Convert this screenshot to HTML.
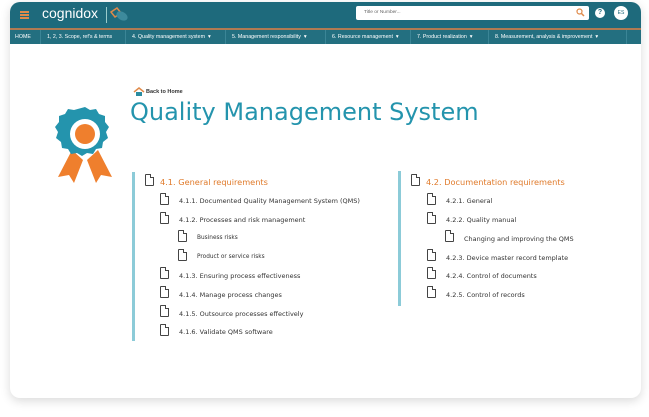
<!DOCTYPE html>
<html><head><style>
*{margin:0;padding:0;box-sizing:border-box}
body{width:649px;height:417px;background:#fff;font-family:"DejaVu Sans",Verdana,sans-serif;position:relative;overflow:hidden}
.card{position:absolute;left:10px;top:2px;width:631px;height:396px;border-radius:10px;background:#fff;box-shadow:0 3px 10px rgba(0,0,0,.15);overflow:hidden}
.top{position:absolute;left:0;top:0;width:100%;height:26px;background:#1e6a7c}
.ol{position:absolute;left:0;top:26px;width:100%;height:2px;background:#b07a52}
.nav{position:absolute;left:0;top:28px;width:100%;height:14px;background:#236f80;font-family:"Liberation Sans",sans-serif;font-size:5.3px;color:#fff}
.nav span{position:absolute;top:4px;white-space:nowrap}
.sep{position:absolute;top:0;width:1px;height:14px;background:#3b8596}
.t{position:absolute;white-space:nowrap;font-size:6.5px;color:#333}
.h{position:absolute;white-space:nowrap;font-size:8.2px;color:#e07b2c}
.doc{position:absolute;width:9px;height:12px;border:1px solid #444;border-radius:1px;background:#fff}
.doc:after{content:"";position:absolute;right:-1px;top:-1px;width:3px;height:3px;background:#fff;border-left:1px solid #444;border-bottom:1px solid #444}
</style></head><body>
<div class="card">
<div class="top"></div>
<div class="ol"></div>
<div style="position:absolute;left:10px;top:9px;width:9px;height:2px;background:#e08a4a;box-shadow:0 3px 0 #e08a4a,0 6px 0 #e08a4a"></div>
<div style="position:absolute;left:32px;top:3px;color:#fff;font-family:'Liberation Sans',sans-serif;font-size:14px">cognidox</div>
<div style="position:absolute;left:96px;top:5px;width:1px;height:16px;background:#9cc"></div>
<svg style="position:absolute;left:99px;top:4px" width="22" height="18"><path d="M2 6 L8 2 L12 7 L6 11Z" fill="none" stroke="#e08a4a" stroke-width="1.5"/><ellipse cx="13" cy="10" rx="6" ry="4" fill="#3d8a9c" transform="rotate(30 13 10)"/></svg>
<div style="position:absolute;left:346px;top:4px;width:233px;height:14px;background:#fff;border-radius:2px;font-family:'Liberation Sans',sans-serif;font-size:4.8px;color:#666;padding:4px 0 0 8px">Title or Number...</div>
<svg style="position:absolute;left:566px;top:6px" width="9" height="9"><circle cx="3.5" cy="3.5" r="2.5" fill="none" stroke="#e08a4a" stroke-width="1.2"/><path d="M5.5 5.5L8 8" stroke="#e08a4a" stroke-width="1.5"/></svg>
<div style="position:absolute;left:585px;top:6px;width:10px;height:10px;border-radius:50%;background:#fff;color:#1e6a7c;font:bold 7px 'Liberation Sans',sans-serif;text-align:center;line-height:10px">?</div>
<div style="position:absolute;left:604px;top:4px;width:14px;height:14px;border-radius:50%;background:#fff;color:#1e6a7c;font:5px 'Liberation Sans',sans-serif;text-align:center;line-height:14px">ES</div>
<div class="nav">
<span style="left:5px">HOME</span><i class="sep" style="left:30px"></i>
<span style="left:37px">1, 2, 3. Scope, ref's &amp; terms</span><i class="sep" style="left:115px"></i>
<span style="left:122px">4. Quality management system &nbsp;▾</span><i class="sep" style="left:215px"></i>
<span style="left:222px">5. Management responsibility &nbsp;▾</span><i class="sep" style="left:315px"></i>
<span style="left:322px">6. Resource management &nbsp;▾</span><i class="sep" style="left:400px"></i>
<span style="left:407px">7. Product realization &nbsp;▾</span><i class="sep" style="left:478px"></i>
<span style="left:485px">8. Measurement, analysis &amp; improvement &nbsp;▾</span><i class="sep" style="left:616px"></i>
</div>
</div>
<svg style="position:absolute;left:133px;top:87px" width="12" height="9"><path d="M1 5L6 1L11 5" fill="none" stroke="#e08a4a" stroke-width="1.5"/><path d="M3 5V9H9V5" fill="#2a8ca0"/></svg>
<div style="position:absolute;left:146px;top:89px;font:bold 5.5px 'Liberation Sans',sans-serif;color:#333">Back to Home</div>
<div style="position:absolute;left:130px;top:98px;font-size:24px;color:#2494ad;white-space:nowrap">Quality Management System</div>
<svg style="position:absolute;left:55px;top:105px" width="60" height="80" viewBox="0 0 60 80">
<path d="M17 45 L3 72 L14 70 L19 78 L28 55Z M43 45 L57 72 L46 70 L41 78 L32 55Z" fill="#ef7f2d"/>
<path d="M30 2 l5 3 6 -1 3 5 6 2 0 6 4 5 -3 5 2 6 -5 4 -1 6 -6 1 -3 5 -6 -1 -5 3 -5 -3 -6 1 -3 -5 -6 -1 -1 -6 -5 -4 2 -6 -3 -5 4 -5 0 -6 6 -2 3 -5 6 1Z" fill="#2494ad"/>
<circle cx="30" cy="29" r="15" fill="#fff"/><circle cx="30" cy="29" r="10" fill="#ef7f2d"/>
</svg>
<div style="position:absolute;left:132px;top:172px;width:3px;height:169px;background:#8ccbd8"></div>
<div style="position:absolute;left:398px;top:171px;width:3px;height:135px;background:#8ccbd8"></div>
<i class="doc" style="left:145px;top:174px"></i><div class="h" style="left:160px;top:177px">4.1. General requirements</div>
<i class="doc" style="left:160px;top:193px"></i><div class="t" style="left:179px;top:197px">4.1.1. Documented Quality Management System (QMS)</div>
<i class="doc" style="left:160px;top:212px"></i><div class="t" style="left:179px;top:216px">4.1.2. Processes and risk management</div>
<i class="doc" style="left:178px;top:230px"></i><div class="t" style="left:197px;top:235px;font-size:5.8px">Business risks</div>
<i class="doc" style="left:178px;top:249px"></i><div class="t" style="left:197px;top:254px;font-size:5.8px">Product or service risks</div>
<i class="doc" style="left:160px;top:267px"></i><div class="t" style="left:179px;top:272px">4.1.3. Ensuring process effectiveness</div>
<i class="doc" style="left:160px;top:286px"></i><div class="t" style="left:179px;top:291px">4.1.4. Manage process changes</div>
<i class="doc" style="left:160px;top:305px"></i><div class="t" style="left:179px;top:310px">4.1.5. Outsource processes effectively</div>
<i class="doc" style="left:160px;top:324px"></i><div class="t" style="left:179px;top:328px">4.1.6. Validate QMS software</div>
<i class="doc" style="left:411px;top:174px"></i><div class="h" style="left:426px;top:177px">4.2. Documentation requirements</div>
<i class="doc" style="left:427px;top:193px"></i><div class="t" style="left:446px;top:197px">4.2.1. General</div>
<i class="doc" style="left:427px;top:212px"></i><div class="t" style="left:446px;top:216px">4.2.2. Quality manual</div>
<i class="doc" style="left:445px;top:230px"></i><div class="t" style="left:464px;top:235px">Changing and improving the QMS</div>
<i class="doc" style="left:427px;top:249px"></i><div class="t" style="left:446px;top:254px">4.2.3. Device master record template</div>
<i class="doc" style="left:427px;top:267px"></i><div class="t" style="left:446px;top:272px">4.2.4. Control of documents</div>
<i class="doc" style="left:427px;top:286px"></i><div class="t" style="left:446px;top:291px">4.2.5. Control of records</div>
</body></html>
